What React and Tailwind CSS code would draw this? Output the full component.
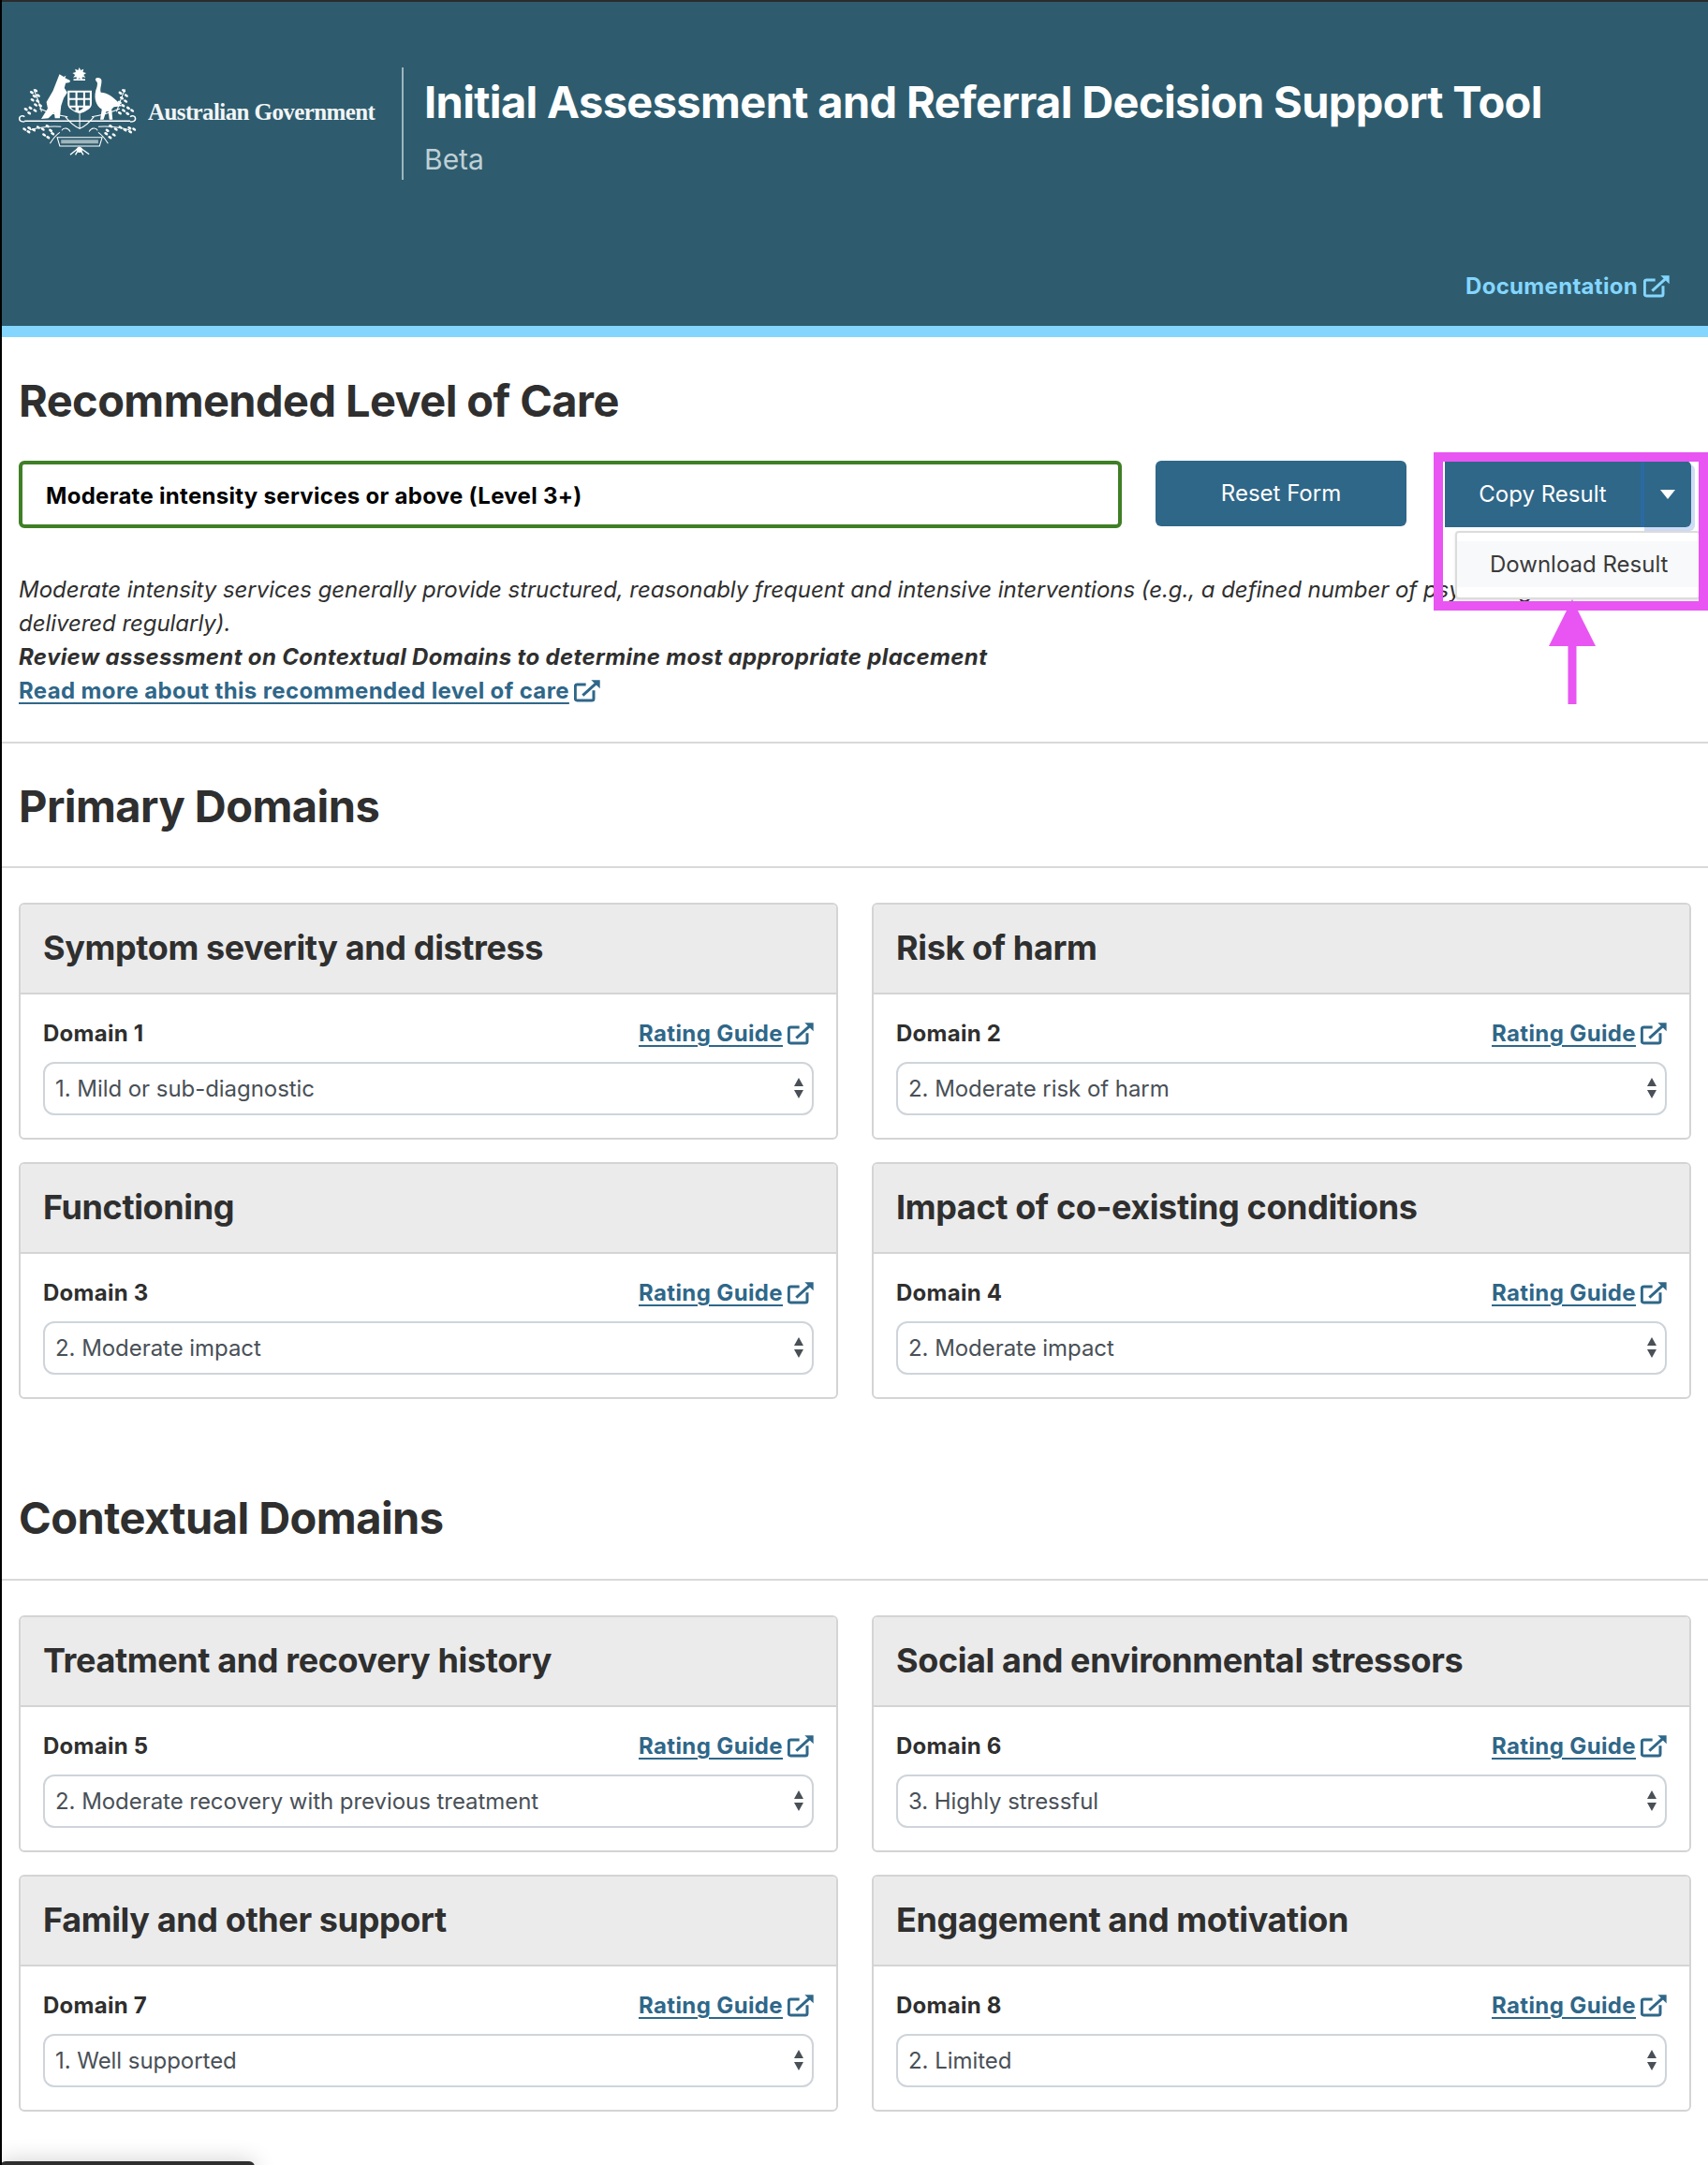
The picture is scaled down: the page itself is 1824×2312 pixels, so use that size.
import React from 'react';

const primary = [
  ['Symptom severity and distress', 'Domain 1', '1. Mild or sub-diagnostic'],
  ['Risk of harm', 'Domain 2', '2. Moderate risk of harm'],
  ['Functioning', 'Domain 3', '2. Moderate impact'],
  ['Impact of co-existing conditions', 'Domain 4', '2. Moderate impact'],
];

const contextual = [
  ['Treatment and recovery history', 'Domain 5', '2. Moderate recovery with previous treatment'],
  ['Social and environmental stressors', 'Domain 6', '3. Highly stressful'],
  ['Family and other support', 'Domain 7', '1. Well supported'],
  ['Engagement and motivation', 'Domain 8', '2. Limited'],
];

const ExternalIcon = ({ className }) => (
  <svg viewBox="0 0 84 72" fill="none" stroke="currentColor" strokeWidth="9" className={className}>
    <path d="M38 15H10a6 6 0 0 0-6 6v39a6 6 0 0 0 6 6h47a6 6 0 0 0 6-6V34" />
    <path d="M28 50 72 10" />
    <path d="M55 1h28v27z" fill="currentColor" stroke="none" />
  </svg>
);

const leaves = [
  [70, 118], [82, 112], [78, 130], [90, 128], [72, 142], [88, 146], [96, 160], [82, 158],
  [342, 120], [352, 112], [360, 128], [346, 136], [358, 146], [340, 150], [350, 160],
  [52, 172], [66, 168], [80, 176], [62, 184], [378, 176], [366, 168], [352, 176], [340, 184], [364, 186],
  [48, 236], [62, 232], [76, 238], [60, 244], [90, 230], [104, 236], [118, 226], [128, 240],
  [384, 236], [370, 232], [356, 238], [372, 244], [342, 230], [328, 236], [312, 226], [302, 240],
  [120, 262], [108, 254], [134, 250], [310, 262], [322, 254], [298, 250],
];

// Commonwealth crest, drawn in the 3x crop's coordinates
const Crest = () => (
  <svg viewBox="30 38 362 282" preserveAspectRatio="none" className="w-[126px] h-[94px] shrink-0" fill="#fff">
    <path d="m216 38 4 9 9-4-2 10 10 3-8 6 6 8-10-1-1 10-8-7-8 7-1-10-10 1 6-8-8-6 10-3-2-10 9 4z" />
    <path d="M198 75h36v5h-36z" />
    <path d="M155 60l13 8 7-4-3 8 16 8-2 6-12 2-4 16 9 14-11 18-8 25-4 40h-15l-2-18-18 18-22 2 20-34-4-20 20-36z" />
    <path d="M265 76c2-8 18-7 19 3 1 15-6 26-2 39 20 0 44 18 64 44l-24 3-7 7 3 33h-10l-3-27-7 2-8 25h-10l5-33c-20-12-27-42-15-72 2-10 2-15-2-17z" />
    <path fillRule="evenodd" d="M180 112h74v42c0 16-20 26-37 32-17-6-37-16-37-32zm6 6v18h18v-18zm24 0v18h18v-18zm24 0v18h14v-18zm-48 24v18h18v-18zm24 0v18h18v-18zm24 0v18h14v-18zm-44 24c4 6 8 9 14 11v-11zm24 0v11c6-2 12-5 14-11z" />
    <g fill="none" stroke="#fff" strokeWidth="4">
      <path d="M48 212c-10 0-16-4-16-10 0-8 10-12 16-6M388 202c0-8-10-12-16-6M372 212c10 0 16-4 16-10M48 210h324" strokeWidth="4.500" />
      <path d="M217 186v50M217 234c-16-6-30-20-44-38M217 234c16-6 30-20 44-38M180 196c-26-4-60-14-86-26M254 196c26-4 60-14 86-26" strokeWidth="3" />
      <path d="M100 180C94 150 84 130 76 108M330 180c8-26 16-48 26-72" strokeWidth="3" />
      <path d="M64 238c30-8 60-14 96-10M370 238c-30-8-60-14-96-10M126 282c8-14 16-26 30-36M304 282c-8-14-16-26-30-36" strokeWidth="3" />
      <path d="M188 244c-6-14-22-14-26-4M246 244c6-14 22-14 26-4" strokeWidth="3" />
      <path d="M148 262h138l-8 28H156z" strokeWidth="3" />
      <path d="M188 318l28-24 30 22M204 318l12-22 12 22" strokeWidth="4" />
    </g>
    {leaves.map(([x, y]) => (
      <ellipse key={`${x}-${y}`} cx={x} cy={y} rx="6.500" ry="4" transform={`rotate(35 ${x} ${y})`} />
    ))}
    <path d="M160 270h114v12H160z" opacity="0.55" />
    <circle cx="216" cy="302" r="9" />
  </svg>
);

const DomainCard = ({ title, domain, value }) => (
  <div className="h-[253px] border-2 border-[#d4d4d4] rounded-[6px] overflow-hidden bg-white">
    <div className="h-[96px] bg-[#ebebeb] border-b-2 border-[#d4d4d4] px-[24px] pb-[2px] flex items-center">
      <h3 className="text-[36px] font-bold tracking-[-0.38px] text-[#2f2f2f]">{title}</h3>
    </div>
    <div className="px-[24px] pt-[24px]">
      <div className="flex items-center justify-between h-[36px]">
        <span className="text-[24px] font-bold tracking-[0.25px] text-[#2f2f2f]">{domain}</span>
        <a className="flex items-center gap-[5px] text-[24px] font-bold tracking-[0.37px] text-[#2f6789] underline underline-offset-4">
          Rating Guide
          <ExternalIcon className="w-[28px] h-[24px]" />
        </a>
      </div>
      <div className="relative mt-[12px]">
        <select defaultValue={value} className="w-full h-[57px] appearance-none rounded-[12px] border-2 border-[#ced4da] bg-white pl-[11px] text-[24px] tracking-[-0.05px] text-[#495057]">
          <option>{value}</option>
        </select>
        <svg viewBox="0 0 12 22" className="absolute right-[10px] top-[17px] w-[12px] h-[22px]" fill="#495057">
          <path d="M6 0l5 9H1zM1 13h10l-5 9z" />
        </svg>
      </div>
    </div>
  </div>
);

const SectionHeading = ({ children, className }) => (
  <div className={`border-b-2 border-[#d9d9d9] ${className}`}>
    <h2 className="px-[18px] text-[47px] leading-[72px] font-bold tracking-[-0.55px] text-[#2f2f2f]">{children}</h2>
  </div>
);

const App = () => {
  return (
    <div className="relative w-[1824px] h-[2312px] overflow-hidden bg-white border-l-2 border-black font-['Inter',sans-serif] text-[#2f2f2f]">
      {/* Header */}
      <header className="h-[360px] border-t-2 border-[#2b2b2b] border-b-[12px] border-b-[#84d6fe] bg-[#2e5c6e] pl-[18px] pr-[41px] pt-[70px] flex flex-col">
        <div className="flex items-start">
          <div className="w-[409px] flex items-center">
            <Crest />
            <span className="ml-[12px] pt-[2px] font-['Liberation_Serif',serif] font-bold text-[25px] text-[#f2f5f6] tracking-[-0.6px] whitespace-nowrap">Australian Government</span>
          </div>
          <div className="h-[120px] w-[2px] bg-[#9eb5be]" />
          <div className="ml-[22px]">
            <h1 className="pt-[1px] text-[47px] leading-[72px] font-bold tracking-[-0.65px] text-white">Initial Assessment and Referral Decision Support Tool</h1>
            <p className="mt-[7px] text-[30px] leading-[36px] text-[#bfd0d6]">Beta</p>
          </div>
        </div>
        <a className="mt-auto mb-[24px] self-end flex items-center gap-[6px] text-[24px] font-bold tracking-[0.3px] text-[#84d6fe]">
          Documentation
          <ExternalIcon className="w-[28px] h-[24px]" />
        </a>
      </header>

      {/* Recommended level of care */}
      <section className="border-b-2 border-[#d9d9d9] px-[18px] h-[434px]">
        <h2 className="pt-[32px] text-[47px] leading-[72px] font-bold tracking-[-0.6px]">Recommended Level of Care</h2>
        <div className="mt-[28px] flex items-start">
          <div className="w-[1178px] h-[72px] rounded-[6px] border-4 border-[#3f7f25] pl-[25px] pt-[3px] flex items-center text-[24px] font-bold tracking-[0.29px] text-black">
            Moderate intensity services or above (Level 3+)
          </div>
          <button className="ml-[36px] w-[268px] h-[70px] rounded-[6px] bg-[#2f6789] text-[24px] text-white">Reset Form</button>
          <div className="ml-[41px] w-[263px] h-[71px] flex text-white">
            <button className="flex-1 text-[24px] bg-[#2f6789]">Copy Result</button>
            <div className="w-[54px] rounded-r-[6px] bg-[#2f6789] border-l-4 border-[#2b6aa0] flex items-center justify-center shadow-[4px_4px_0_#cfdcf5]">
              <div className="w-0 h-0 border-x-[8px] border-x-transparent border-t-[10px] border-t-white" />
            </div>
          </div>
        </div>
        <div className="mt-[48px] text-[24px] leading-[36px]">
          <p className="italic tracking-[-0.05px]">Moderate intensity services generally provide structured, reasonably frequent and intensive interventions (e.g., a defined number of psychological sessions delivered regularly).</p>
          <p className="italic font-bold tracking-[0.35px]">Review assessment on Contextual Domains to determine most appropriate placement</p>
          <a className="inline-flex items-center gap-[5px] font-bold tracking-[0.36px] text-[#2f6789] underline underline-offset-4">
            Read more about this recommended level of care
            <ExternalIcon className="w-[28px] h-[24px]" />
          </a>
        </div>
      </section>

      {/* Primary domains */}
      <SectionHeading className="pt-[31px] pb-[28px]">Primary Domains</SectionHeading>
      <div className="pl-[18px] pr-[18px] pt-[37px] grid grid-cols-2 gap-x-[36px] gap-y-[24px]">
        {primary.map((d) => (
          <DomainCard key={d[1]} title={d[0]} domain={d[1]} value={d[2]} />
        ))}
      </div>

      {/* Contextual domains */}
      <SectionHeading className="mt-[91px] pb-[29px]">Contextual Domains</SectionHeading>
      <div className="pl-[18px] pr-[18px] pt-[37px] grid grid-cols-2 gap-x-[36px] gap-y-[24px]">
        {contextual.map((d) => (
          <DomainCard key={d[1]} title={d[0]} domain={d[1]} value={d[2]} />
        ))}
      </div>

      {/* Annotation over the dropdown */}
      <div className="absolute left-[1552px] top-[567px] w-[262px] h-[73px] rounded-[4px] border-2 border-[#dcdcdc] bg-white pt-[9px] shadow-sm">
        <div className="h-[49px] bg-[#f8f9fa] pl-[35px] flex items-center text-[24px] text-[#3a3a3a]">Download Result</div>
      </div>
      <div className="absolute left-[1529px] top-[483px] w-[293px] h-[169px] border-[10px] border-[#e855f2]" />
      <svg viewBox="0 0 50 112" className="absolute left-[1652px] top-[640px] w-[50px] h-[112px]" fill="#e855f2">
        <path d="M25 0 50 50H29.500v62h-9V50H0z" />
      </svg>

      {/* Dark tab at the bottom */}
      <div className="absolute -left-[2px] top-[2308px] w-[272px] h-[20px] rounded-t-[6px] bg-[#2f2f2f] shadow-[0_0_24px_rgba(0,0,0,0.2)]" />
    </div>
  );
};

export default App;
